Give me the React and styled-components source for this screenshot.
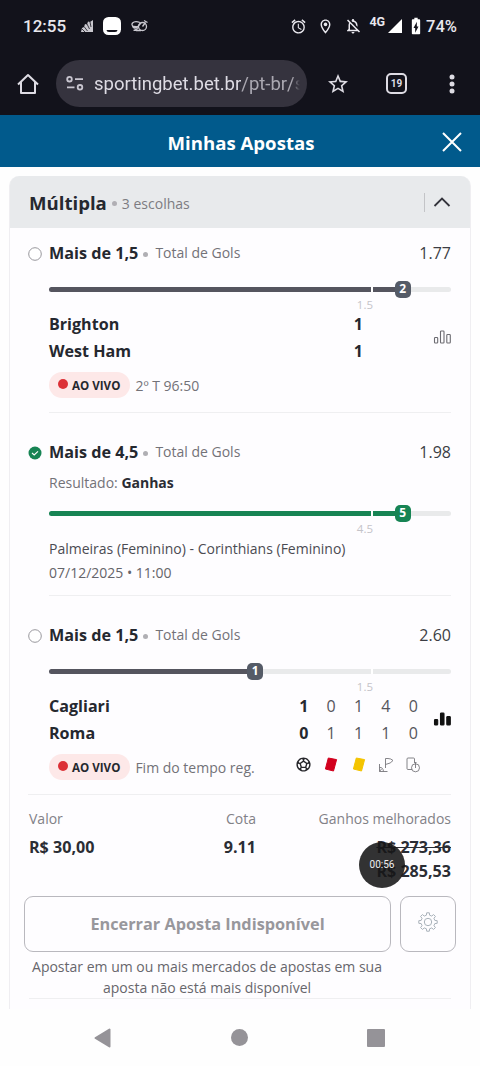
import React from "react";
import styled, { createGlobalStyle } from "styled-components";
import {
  MdAlarm,
  MdOutlineLocationOn,
  MdOutlineNotificationsOff,
  MdBatteryChargingFull,
  MdStarBorder,
  MdOutlineSportsSoccer,
} from "react-icons/md";

const selections = [
  {
    pick: "Mais de 1,5",
    market: "Total de Gols",
    odds: "1.77",
    line: "1.5",
    current: 2,
    progress: 88,
    live: "2º T 96:50",
    teams: [
      { name: "Brighton", scores: [1] },
      { name: "West Ham", scores: [1] },
    ],
  },
  {
    pick: "Mais de 4,5",
    market: "Total de Gols",
    odds: "1.98",
    line: "4.5",
    current: 5,
    progress: 88,
    won: true,
    event: "Palmeiras (Feminino) - Corinthians (Feminino)",
    date: "07/12/2025 • 11:00",
  },
  {
    pick: "Mais de 1,5",
    market: "Total de Gols",
    odds: "2.60",
    line: "1.5",
    current: 1,
    progress: 51.3,
    live: "Fim do tempo reg.",
    stats: true,
    teams: [
      { name: "Cagliari", scores: [1, 0, 1, 4, 0] },
      { name: "Roma", scores: [0, 1, 1, 1, 0] },
    ],
  },
];

const gearPath = () => {
  const teeth = 8;
  const points = [];
  for (let i = 0; i < teeth; i++) {
    const mid = (i * 2 * Math.PI) / teeth;
    [
      [7, -0.23],
      [9.3, -0.14],
      [9.3, 0.14],
      [7, 0.23],
    ].forEach(([r, a]) => {
      const x = 10 + r * Math.sin(mid + a);
      const y = 10 - r * Math.cos(mid + a);
      points.push(`${x.toFixed(2)} ${y.toFixed(2)}`);
    });
  }
  return `M${points.join("L")}Z`;
};

const StatusBar = () => (
  <Status>
    <Clock>12:55</Clock>
    <Notifications>
      <svg width="12" height="12" viewBox="0 0 12 12">
        <path d="M0 12L1 8L3 7L4 4L6 4.500L7 1.500L9 2L12 0V12Z" fill="#c9c8cf" />
        <path
          d="M1 9L4 12M3 6.500L6.500 11M6 4L8.500 9M9 2L10 7"
          stroke="#14131c"
          strokeWidth=".8"
        />
      </svg>
      <svg width="18" height="18" viewBox="0 0 18 18">
        <rect width="18" height="18" rx="5.500" fill="#fff" />
        <path d="M3.500 13H14.500Q14.500 15 12 15H6Q3.500 15 3.500 13Z" fill="#14131c" />
      </svg>
      <svg
        width="17"
        height="14"
        viewBox="0 0 17 14"
        fill="none"
        stroke="#c9c8cf"
        strokeWidth="1.300"
      >
        <circle cx="11.500" cy="7.500" r="4" />
        <path d="M9 3.500Q4 1.500 1.500 4Q0 6 2.500 7.500L8 8M1.500 7Q2 10 6 8.500L10 4M2.500 11.500L7 9.500M11.500 7.500L14.500 3.500M13 1.500L16.500 3.500M5 11.500H10" />
      </svg>
    </Notifications>
    <SystemIcons>
      <MdAlarm size={17} />
      <MdOutlineLocationOn size={17} />
      <MdOutlineNotificationsOff size={18} />
      <Network>4G</Network>
      <svg width="14" height="14" viewBox="0 0 14 14">
        <path d="M14 0V14H0Z" fill="#fff" />
      </svg>
      <BatteryIcon size={20} />
      <Battery>74%</Battery>
    </SystemIcons>
  </Status>
);

const Browser = () => (
  <Toolbar>
    <svg
      width="22"
      height="22"
      viewBox="0 0 22 22"
      fill="none"
      stroke="#dedce4"
      strokeWidth="2"
      strokeLinejoin="round"
    >
      <path d="M1 11.500L11 2L21 11.500M4 9V20H18V9" />
    </svg>
    <Address>
      <svg
        width="18"
        height="15"
        viewBox="0 0 18 15"
        fill="none"
        stroke="#c9c6d0"
        strokeWidth="1.800"
      >
        <circle cx="3.500" cy="3.200" r="2.300" />
        <path d="M9 3.200H17M1 11.300H8.500" />
        <circle cx="14" cy="11.300" r="2.300" />
      </svg>
      <Url>
        sportingbet.bet.br<span>/pt-br/s</span>
      </Url>
    </Address>
    <Actions>
      <MdStarBorder size={24} />
      <Tabs>19</Tabs>
      <svg width="6" height="20" viewBox="0 0 6 20" fill="#dedce4">
        <circle cx="3" cy="3" r="2.500" />
        <circle cx="3" cy="10" r="2.500" />
        <circle cx="3" cy="17" r="2.500" />
      </svg>
    </Actions>
  </Toolbar>
);

const StatusMark = ({ won }) => (
  <Mark>
    {won ? (
      <svg width="14" height="14" viewBox="0 0 14 14">
        <circle cx="7" cy="7" r="6.500" fill="#178454" />
        <path d="M4 7L6.200 9L10 5.300" fill="none" stroke="#fff" strokeWidth="1.100" />
      </svg>
    ) : (
      <svg width="14" height="14" viewBox="0 0 14 14">
        <circle cx="7" cy="7" r="6.300" fill="#fff" stroke="#98979d" strokeWidth="1" />
      </svg>
    )}
  </Mark>
);

const ChartIcon = ({ filled }) => (
  <svg
    width="18"
    height="14"
    viewBox="0 0 18 14"
    fill={filled ? "#111" : "none"}
    stroke={filled ? "#111" : "#6c6b71"}
    strokeWidth="1.100"
  >
    <rect x="1.500" y="7.500" width="3.200" height="5.500" rx=".8" />
    <rect x="7.500" y="1" width="3.500" height="12" rx=".8" />
    <rect x="13.800" y="4.500" width="3.500" height="8.500" rx=".8" />
  </svg>
);

const StatIcons = () => (
  <Stats>
    <MdOutlineSportsSoccer size={17} color="#26262b" />
    <svg width="14" height="15" viewBox="0 0 14 15">
      <path d="M4.300 1L12.600 2.600L9.500 14L1.400 12Z" fill="#d2001e" stroke="#d2001e" strokeLinejoin="round" />
    </svg>
    <svg width="14" height="15" viewBox="0 0 14 15">
      <path d="M4.300 1L12.600 2.600L9.500 14L1.400 12Z" fill="#f4c400" stroke="#f4c400" strokeLinejoin="round" />
    </svg>
    <svg width="16" height="16" viewBox="0 0 16 16" fill="none" stroke="#77767c" strokeWidth=".9">
      <path d="M7.500 11V1.500H10Q13 1.500 15 3.500Q13 6.500 7.500 7.500M1.500 7V14.500H9.500M1.500 10.500Q5 10 5.500 14.500M1.500 14.500L3.500 12" />
    </svg>
    <svg width="14" height="16" viewBox="0 0 14 16" fill="none" stroke="#77767c" strokeWidth=".9">
      <path d="M6 12.500H2Q1 12.500 1 11.500V2Q1 1 2 1H7.500Q8.500 1 8.500 2V6" />
      <circle cx="9.500" cy="10.800" r="4" />
      <path d="M9.500 11V6M8.500 5.500H10.500" />
    </svg>
  </Stats>
);

const Selection = ({ item, first, last }) => (
  <SelectionBox $first={first}>
    <PickRow>
      <StatusMark won={item.won} />
      <Pick>{item.pick}</Pick>
      <Dot />
      <Market>{item.market}</Market>
      <Odds>{item.odds}</Odds>
    </PickRow>
    <Details $last={last}>
      {item.won && (
        <Result>
          Resultado: <b>Ganhas</b>
        </Result>
      )}
      <Progress>
        <Track>
          <Fill $won={item.won} style={{ width: `${item.progress}%` }} />
          <Tick />
          <Knob $won={item.won} style={{ left: `${item.progress}%` }}>
            {item.current}
          </Knob>
          <Line>{item.line}</Line>
        </Track>
      </Progress>
      {item.teams && (
        <Match>
          <Teams>
            {item.teams.map((team) => (
              <Team key={team.name}>
                <TeamName>{team.name}</TeamName>
                <Scores $single={team.scores.length === 1}>
                  {team.scores.map((score, i) => (
                    <Score key={i} $main={i === 0}>
                      {score}
                    </Score>
                  ))}
                </Scores>
              </Team>
            ))}
          </Teams>
          <ChartIcon filled={item.stats} />
        </Match>
      )}
      {item.live && (
        <LiveRow>
          <Badge>AO VIVO</Badge>
          {item.live}
          {item.stats && <StatIcons />}
        </LiveRow>
      )}
      {item.event && (
        <Event>
          <p>{item.event}</p>
          <time>{item.date}</time>
        </Event>
      )}
    </Details>
  </SelectionBox>
);

const App = () => {
  return (
    <Screen>
      <GlobalStyle />
      <StatusBar />
      <Browser />
      <Header>
        <h1>Minhas Apostas</h1>
        <svg width="20" height="20" viewBox="0 0 20 20" stroke="#fff" strokeWidth="2">
          <path d="M1 1L19 19M19 1L1 19" />
        </svg>
      </Header>
      <Content>
        <Card>
          <CardHeader>
            <CardTitle>Múltipla</CardTitle>
            <Dot />
            <Choices>3 escolhas</Choices>
            <Collapse>
              <svg width="18" height="12" viewBox="0 0 18 12" fill="none" stroke="#34343c" strokeWidth="1.800">
                <path d="M1.500 10L9 2.500L16.500 10" />
              </svg>
            </Collapse>
          </CardHeader>
          {selections.map((item, i) => (
            <Selection
              key={i}
              item={item}
              first={i === 0}
              last={i === selections.length - 1}
            />
          ))}
          <Summary>
            <Amount>
              <span>Valor</span>
              <b>R$ 30,00</b>
            </Amount>
            <Amount $right>
              <span>Cota</span>
              <b>9.11</b>
            </Amount>
            <Amount $right>
              <span>Ganhos melhorados</span>
              <s>R$ 273,36</s>
              <b>R$ 285,53</b>
              <Recorder>00:56</Recorder>
            </Amount>
          </Summary>
          <CashOut>
            <CashOutButton disabled>Encerrar Aposta Indisponível</CashOutButton>
            <SettingsButton>
              <svg width="20" height="20" viewBox="0 0 20 20" fill="none" stroke="#a9b2ba" strokeLinejoin="round">
                <path d={gearPath()} />
                <circle cx="10" cy="10" r="3.700" />
              </svg>
            </SettingsButton>
          </CashOut>
          <Notice>
            Apostar em um ou mais mercados de apostas em sua aposta não está
            mais disponível
          </Notice>
        </Card>
      </Content>
      <NavBar>
        <svg width="17" height="20" viewBox="0 0 17 20">
          <path d="M15.500 1.500V18.500L1.500 10Z" fill="#959398" stroke="#959398" strokeWidth="2" strokeLinejoin="round" />
        </svg>
        <NavCircle />
        <NavSquare />
      </NavBar>
    </Screen>
  );
};

export default App;

const GlobalStyle = createGlobalStyle`
  * {
    box-sizing: border-box;
  }
  body {
    margin: 0;
    background: #fefefe;
    font-family: "Open Sans", "Noto Sans", sans-serif;
  }
  h1, h2, p {
    margin: 0;
  }
  svg {
    display: block;
    flex-shrink: 0;
  }
`;

const Screen = styled.div`
  display: flex;
  flex-direction: column;
  width: 480px;
  height: 1066px;
  overflow: hidden;
`;

const Status = styled.div`
  display: flex;
  align-items: center;
  height: 52px;
  padding: 0 23px 0 23px;
  background: #12121b;
  color: #e9e8ee;
  font-family: Roboto, sans-serif;
`;

const Clock = styled.span`
  width: 58px;
  font-size: 17px;
  font-weight: 500;
`;

const Notifications = styled.div`
  display: flex;
  align-items: center;
  gap: 10px;
`;

const SystemIcons = styled.div`
  display: flex;
  align-items: center;
  margin-left: auto;
  gap: 10px;
`;

const Network = styled.span`
  margin: -10px -7px 0 -3px;
  font-size: 12.5px;
  font-weight: 700;
`;

const BatteryIcon = styled(MdBatteryChargingFull)`
  margin-left: -6px;
  color: #fff;
`;

const Battery = styled.span`
  margin-left: -10px;
  font-size: 16.5px;
  font-weight: 500;
`;

const Toolbar = styled.div`
  display: flex;
  align-items: center;
  height: 63px;
  padding: 0 25px 0 17px;
  background: #12121b;
  color: #dedce4;
  font-family: Roboto, sans-serif;
`;

const Address = styled.div`
  display: flex;
  align-items: center;
  gap: 10px;
  width: 251px;
  height: 47px;
  margin-left: 17px;
  padding: 0 7px 0 10px;
  border-radius: 24px;
  background: #35333e;
`;

const Url = styled.div`
  flex: 1;
  overflow: hidden;
  white-space: nowrap;
  font-size: 18.5px;
  line-height: 26px;
  color: #dedce4;
  mask-image: linear-gradient(to right, #000 96%, transparent);
  span {
    color: #aaa8b1;
  }
`;

const Actions = styled.div`
  display: flex;
  flex: 1;
  align-items: center;
  padding-left: 19px;
  svg:last-child {
    margin-left: auto;
  }
`;

const Tabs = styled.div`
  width: 21px;
  height: 21px;
  margin-left: 36px;
  border: 2px solid #dedce4;
  border-radius: 5px;
  font-size: 10px;
  font-weight: 700;
  line-height: 17px;
  text-align: center;
`;

const Header = styled.header`
  display: flex;
  align-items: center;
  height: 52px;
  padding: 2px 18px 0 28px;
  background: #015a8c;
  color: #fff;
  h1 {
    flex: 1;
    padding-left: 12px;
    font-size: 18.6px;
    font-weight: 700;
    text-align: center;
  }
`;

const Content = styled.main`
  height: 842px;
  padding: 9px 9px 0;
  overflow: hidden;
`;

const Card = styled.section`
  height: 860px;
  border: 1px solid #efeef1;
  border-top: 0;
  border-radius: 10px;
  background: #fefdff;
`;

const CardHeader = styled.div`
  display: flex;
  align-items: center;
  height: 52px;
  padding: 1px 19px 0;
  border-radius: 9px 9px 0 0;
  background: #e8eaec;
`;

const CardTitle = styled.h2`
  font-size: 18.6px;
  font-weight: 700;
  color: #25282f;
`;

const Dot = styled.i`
  width: 5px;
  height: 5px;
  margin: 2px 5px 0;
  border-radius: 50%;
  background: #b0afb4;
`;

const Choices = styled.span`
  margin-top: 2px;
  font-size: 14px;
  color: #7d7c82;
`;

const Collapse = styled.div`
  display: flex;
  align-items: center;
  height: 19px;
  margin: -1px 0 0 auto;
  padding-left: 8px;
  border-left: 1px solid #c3c4c7;
`;

const SelectionBox = styled.article`
  padding: ${(p) => (p.$first ? 12 : 26)}px 19px 0 18px;
`;

const PickRow = styled.div`
  display: flex;
  align-items: center;
  height: 26px;
`;

const Mark = styled.span`
  width: 21px;
  padding-top: 2px;
`;

const Pick = styled.b`
  margin-top: -1px;
  font-size: 16.2px;
  color: #25282f;
`;

const Market = styled.span`
  margin: -1px 0 0 2px;
  font-size: 14px;
  color: #737278;
`;

const Odds = styled.span`
  margin-left: auto;
  font-size: 16px;
  color: #3c3d44;
`;

const Details = styled.div`
  margin-left: ${(p) => (p.$last ? 0 : 21)}px;
  padding-left: ${(p) => (p.$last ? 21 : 0)}px;
  border-bottom: 1px solid #efeff1;
`;

const Result = styled.p`
  height: 25px;
  padding-top: 8px;
  font-size: 14px;
  line-height: 20px;
  color: #737278;
  b {
    color: #2b2d34;
  }
`;

const Progress = styled.div`
  height: 44px;
  padding-top: 21px;
`;

const Track = styled.div`
  position: relative;
  height: 5px;
  border-radius: 3px;
  background: #e9eaeb;
`;

const Fill = styled.div`
  height: 5px;
  border-radius: 3px;
  background: ${(p) => (p.$won ? "#178454" : "#55555f")};
`;

const Tick = styled.i`
  position: absolute;
  top: 0;
  left: 80%;
  width: 2px;
  height: 5px;
  background: #fff;
`;

const Knob = styled.span`
  position: absolute;
  top: -6px;
  width: 16px;
  height: 17px;
  border-radius: 5px;
  background: ${(p) => (p.$won ? "#178454" : "#555b67")};
  color: #fff;
  font-size: 12px;
  font-weight: 700;
  line-height: 16px;
  text-align: center;
  transform: translateX(-50%);
`;

const Line = styled.span`
  position: absolute;
  top: 10px;
  right: 78px;
  font-size: 11.5px;
  line-height: 16px;
  color: #c5c4c9;
`;

const Match = styled.div`
  display: flex;
  align-items: center;
`;

const Teams = styled.div`
  flex: 1;
`;

const Team = styled.div`
  display: flex;
  align-items: center;
  height: 27px;
`;

const TeamName = styled.b`
  font-size: 16.1px;
  color: #25282f;
`;

const Scores = styled.div`
  display: flex;
  margin-right: ${(p) => (p.$single ? 61 : 6)}px;
  margin-left: auto;
`;

const Score = styled.span`
  width: 27.4px;
  font-size: 16px;
  font-weight: ${(p) => (p.$main ? 700 : 400)};
  color: ${(p) => (p.$main ? "#25282f" : "#55555c")};
  text-align: center;
`;

const LiveRow = styled.div`
  display: flex;
  align-items: center;
  height: 48px;
  padding-bottom: 6px;
  font-size: 14px;
  color: #737278;
`;

const Badge = styled.span`
  display: flex;
  align-items: center;
  height: 26px;
  margin-right: 5px;
  padding: 0 10px 0 9px;
  border-radius: 13px;
  background: #fde8e8;
  color: #25282f;
  font-size: 11.6px;
  font-weight: 700;
  &::before {
    width: 10px;
    height: 10px;
    margin: -3px 4px 0 0;
    border-radius: 50%;
    background: #dc3036;
    content: "";
  }
`;

const Stats = styled.div`
  display: grid;
  grid-template-columns: repeat(5, 27.4px);
  align-items: center;
  justify-items: center;
  margin: -5px 24px 0 auto;
`;

const Event = styled.div`
  height: 61px;
  padding-top: 3px;
  font-size: 14px;
  line-height: 24px;
  color: #4b4b52;
  time {
    color: #65646a;
  }
`;

const Summary = styled.div`
  display: grid;
  grid-template-columns: 120px 107px 1fr;
  height: 92px;
  padding: 12px 19px 0;
`;

const Amount = styled.div`
  position: relative;
  display: flex;
  flex-direction: column;
  align-items: ${(p) => (p.$right ? "flex-end" : "flex-start")};
  color: #2b2d34;
  font-size: 16.1px;
  line-height: 24px;
  span {
    margin-bottom: 4px;
    font-size: 14px;
    color: #828187;
  }
  s {
    font-weight: 700;
  }
`;

const Recorder = styled.div`
  position: absolute;
  top: 35px;
  right: 46px;
  width: 46px;
  height: 46px;
  border-radius: 50%;
  background: rgba(22, 22, 23, 0.88);
  color: #eee;
  font-family: Roboto, sans-serif;
  font-size: 10px;
  line-height: 46px;
  text-align: center;
`;

const CashOut = styled.div`
  display: flex;
  gap: 9px;
  margin-top: 9px;
  padding: 0 14px;
`;

const CashOutButton = styled.button`
  flex: 1;
  height: 56px;
  padding: 0 0 1px;
  border: 1px solid #b9b8be;
  border-radius: 9px;
  background: none;
  color: #98979c;
  font-family: inherit;
  font-size: 16.3px;
  font-weight: 700;
`;

const SettingsButton = styled.button`
  display: flex;
  align-items: center;
  justify-content: center;
  width: 56px;
  height: 56px;
  padding: 0 0 4px;
  border: 1px solid #b9b8be;
  border-radius: 9px;
  background: none;
`;

const Notice = styled.p`
  height: 47px;
  margin: 0 19px;
  padding: 4px 66px 0 0;
  border-bottom: 1px solid #efeff1;
  color: #67666c;
  font-size: 14px;
  line-height: 21px;
  text-align: center;
`;

const NavBar = styled.nav`
  display: flex;
  align-items: center;
  justify-content: space-between;
  height: 57px;
  padding: 0 95px 0 94px;
`;

const NavCircle = styled.div`
  width: 17px;
  height: 17px;
  border-radius: 50%;
  background: #959398;
`;

const NavSquare = styled.div`
  width: 18px;
  height: 18px;
  border-radius: 1px;
  background: #959398;
`;
